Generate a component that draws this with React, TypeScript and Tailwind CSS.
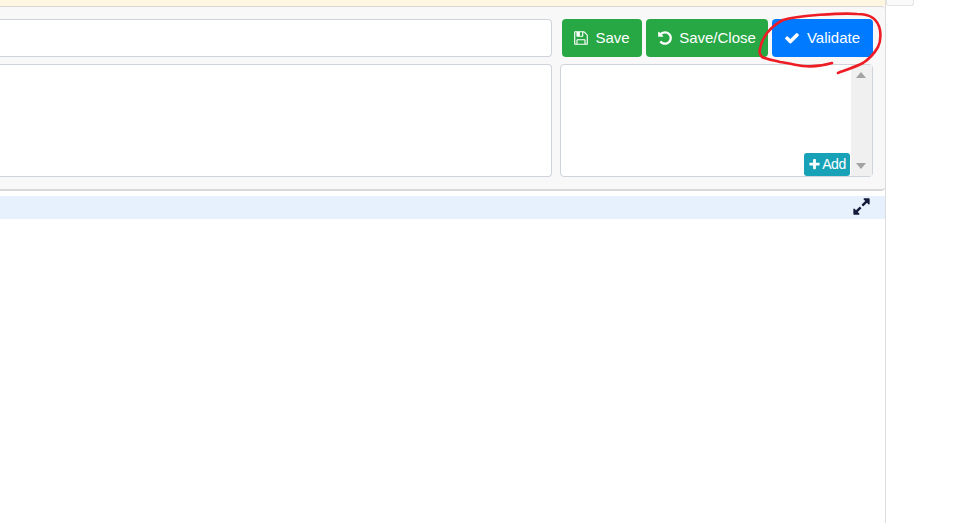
function Fa({ d, className }: { d: string; className: string }) {
  return (
    <svg viewBox="0 0 1792 1792" fill="currentColor" className={className}>
      <path d={d} />
    </svg>
  );
}

const CHECK = "M1671 566q0 40-28 68l-724 724-136 136q-28 28-68 28t-68-28l-136-136-362-362q-28-28-28-68t28-68l136-136q28-28 68-28t68 28l294 295 656-657q28-28 68-28t68 28l136 136q28 28 28 68z";
const PLUS = "M1600 736v192q0 40-28 68t-68 28h-416v416q0 40-28 68t-68 28h-192q-40 0-68-28t-28-68v-416h-416q-40 0-68-28t-28-68v-192q0-40 28-68t68-28h416v-416q0-40 28-68t68-28h192q40 0 68 28t28 68v416h416q40 0 68 28t28 68z";
const UNDO = "M1664 896q0 156-61 298t-164 245-245 164-298 61q-172 0-327-72.5t-264-204.5q-7-10-6.5-22.5t8.5-20.5l137-138q10-9 25-9 16 2 23 12 73 95 179 147t225 52q104 0 198.5-40.5t163.5-109.5 109.5-163.5 40.5-198.5-40.5-198.5-109.5-163.5-163.5-109.5-198.5-40.5q-98 0-188 35.5t-160 101.5l137 138q31 30 14 69-17 40-59 40h-448q-26 0-45-19t-19-45v-448q0-42 40-59 39-17 69 14l130 129q107-101 244.5-156.5t284.5-55.5q156 0 298 61t245 164 164 245 61 298z";
const SAVE = "M512 1536h768v-384h-768v384zm896 0h128v-896q0-14-10-38.500t-20-34.500l-281-281q-10-10-34-20t-39-10v416q0 40-28 68t-68 28h-576q-40 0-68-28t-28-68v-416h-128v1280h128v-416q0-40 28-68t68-28h832q40 0 68 28t28 68v416zm-384-928v-320q0-13-9.500-22.500t-22.500-9.500h-192q-13 0-22.500 9.500t-9.500 22.500v320q0 13 9.500 22.500t22.500 9.500h192q13 0 22.500-9.500t9.500-22.500zm640 32v928q0 40-28 68t-68 28h-1344q-40 0-68-28t-28-68v-1344q0-40 28-68t68-28h928q40 0 88 20t76 48l280 280q28 28 48 76t20 88z";
const EXPAND = "M883 1056q0 13-10 23l-332 332 144 144q19 19 19 45t-19 45-45 19h-448q-26 0-45-19t-19-45v-448q0-26 19-45t45-19 45 19l144 144 332-332q10-10 23-10t23 10l114 114q10 10 10 23zm781-864v448q0 26-19 45t-45 19-45-19l-144-144-332 332q-10 10-23 10t-23-10l-114-114q-10-10-10-23t10-23l332-332-144-144q-19-19-19-45t19-45 45-19h448q26 0 45 19t19 45z";

function ActionButton({ icon, label, width, color, gap }: { icon: string; label: string; width: string; color: string; gap: string }) {
  return (
    <button className={`flex h-[38px] items-center justify-center rounded-[4px] text-[15px] text-white ${gap} ${width} ${color}`}>
      <Fa d={icon} className="mb-[1px] size-[16px]" />
      <span className="pt-[1px]">{label}</span>
    </button>
  );
}

export default function App() {
  return (
    <div className="relative flex h-[523px] w-[972px] overflow-hidden bg-white font-['Liberation_Sans',Arial,sans-serif]">
      <div className="flex w-[886px] flex-col border-r border-[#dddddd]">
        <div className="h-[6px] bg-[#fff6e2]" />
        <div className="flex h-[185px] flex-col gap-[7px] rounded-r-[4px] border-t border-b-2 border-[#d8d8d8] bg-[#f8f8f8] pt-[12px] pr-[12px]">
          <div className="flex gap-[4px]">
            <div className="mr-[6px] h-[38px] w-[552px] rounded-r-[4px] border border-l-0 border-[#ced4da] bg-white" />
            <ActionButton icon={SAVE} label="Save" gap="gap-[6px] pr-[1px]" width="w-[80px]" color="bg-[#28a745]" />
            <ActionButton icon={UNDO} label="Save/Close" gap="gap-[6px] pr-[1px]" width="w-[122px]" color="bg-[#28a745]" />
            <ActionButton icon={CHECK} label="Validate" gap="gap-[7px] pr-[1px]" width="w-[101px]" color="bg-[#007bff]" />
          </div>
          <div className="flex gap-[8px]">
            <div className="h-[113px] w-[552px] rounded-r-[4px] border border-l-0 border-[#ced4da] bg-white" />
            <div className="relative flex h-[113px] w-[313px] justify-end rounded-[4px] border border-[#ced4da] bg-white">
              <div className="flex w-[21px] flex-col items-center justify-between bg-[#f0f0f0] py-[7px] pr-[1px]">
                <div className="h-0 w-0 border-x-[5px] border-b-[6px] border-x-transparent border-b-[#a3a3a3]" />
                <div className="h-0 w-0 border-x-[5px] border-t-[6px] border-x-transparent border-t-[#a3a3a3]" />
              </div>
              <button className="absolute top-[88px] left-[243px] flex h-[23px] w-[46px] items-center justify-center gap-[1px] rounded-[3px] bg-[#17a2b8] text-[14px] tracking-[-0.4px] text-white">
                <Fa d={PLUS} className="size-[13px]" />
                <span>Add</span>
              </button>
            </div>
          </div>
        </div>
        <div className="mt-[5px] flex h-[23px] items-center justify-end bg-[#e6f1fd] pr-[14px] pb-[3px]">
          <Fa d={EXPAND} className="size-[19px] text-[#151a3a]" />
        </div>
      </div>
      <div className="h-[6px] w-[28px] rounded-b-[3px] border border-t-0 border-[#e4e4e4] bg-[#fafafa]" />
      <svg className="pointer-events-none absolute inset-0" width="972" height="523" viewBox="0 0 972 523" fill="none">
        <path
          d="M832 63 C822 66 812 67 803 66 C795 65 788 63 780 62 C772 60 766 59 762 57 C759 54 759 52 760 49 C761 43 764 37 767 33 C772 27 777 23 783 20 C793 17 805 16 817 15 C832 14 845 13 857 14 C864 14 869 15 873 18 C877 21 879 25 880 30 C881 37 880 43 878 47 C874 54 869 59 863 63 C855 67 846 70 838 73"
          stroke="#ee1c25"
          strokeWidth="2.6"
          strokeLinecap="round"
        />
      </svg>
    </div>
  );
}
